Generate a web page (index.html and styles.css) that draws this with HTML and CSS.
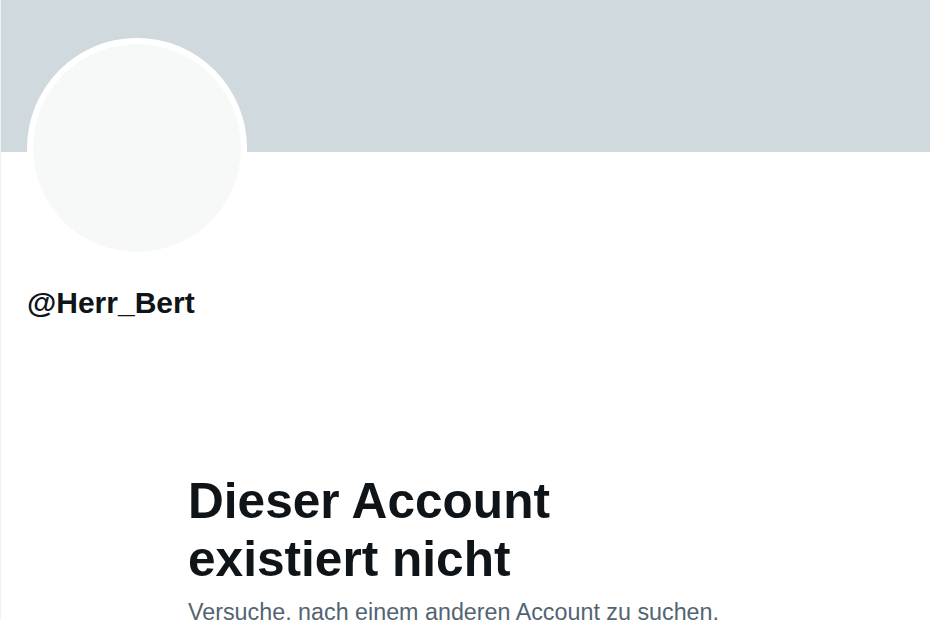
FILE: index.html
```html
<!DOCTYPE html>
<html lang="de">
<head>
    <meta charset="UTF-8">
    <meta name="viewport" content="width=device-width, initial-scale=1.0">
    <title>@Herr_Bert</title>
    <link rel="stylesheet" href="styles.css">
</head>
<body>
    <div class="page">
        <div class="banner"></div>
        <div class="profile">
            <div class="avatar"><div class="avatar-inner"></div></div>
            <div class="handle">@Herr_Bert</div>
        </div>
        <div class="empty">
            <h1>Dieser Account existiert nicht</h1>
            <p>Versuche, nach einem anderen Account zu suchen.</p>
        </div>
    </div>
</body>
</html>
```

FILE: styles.css
```css
/* profil nicht gefunden */
body {
    margin: 0;
    font-family: 'Liberation Sans', Arial, sans-serif;
    background-color: #ffffff;
    color: #0f1419;
}

.page {
    min-height: 620px;
    border-left: 1px solid #eff3f4;
    overflow: hidden;
}

.banner {
    height: 152px;
    background-color: #cfd9de;
}

.profile {
    padding-left: 26px;
}

.avatar {
    width: 220px;
    height: 220px;
    margin-top: -114px;
    border-radius: 50%;
    background-color: #ffffff;
    padding: 6px;
    box-sizing: border-box;
}

.avatar-inner {
    width: 100%;
    height: 100%;
    border-radius: 50%;
    background-color: #f7f9f9;
}

.handle {
    margin-top: 25px;
    font-size: 30px;
    line-height: 40px;
    font-weight: bold;
}

.empty {
    margin-left: 187px;
    margin-top: 150px;
    max-width: 640px;
}

.empty h1 {
    max-width: 440px;
    margin: 0 0 8px 0;
    font-size: 49.6px;
    line-height: 57.6px;
    font-weight: bold;
}

.empty p {
    margin: 0;
    font-size: 23.3px;
    line-height: 32px;
    color: #536471;
}
```
